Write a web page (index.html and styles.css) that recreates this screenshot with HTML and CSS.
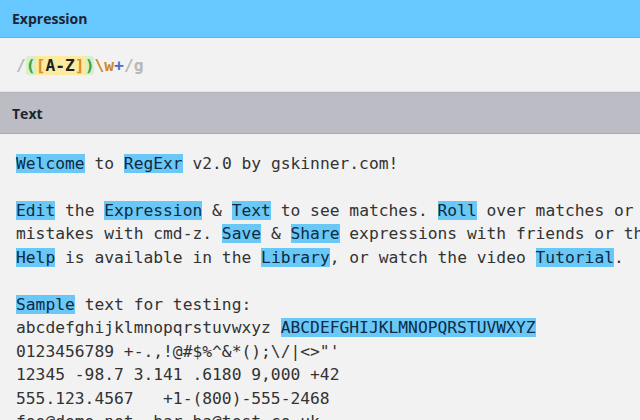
FILE: index.html
```html
<!DOCTYPE html>
<html lang="en">
<head>
    <meta charset="UTF-8">
    <title>RegExr</title>
    <link rel="stylesheet" href="styles.css">
</head>
<body>
    <div class="panel-title expression-title">Expression</div>
    <div class="expression">
        <span class="slash">/</span><span class="group"><span class="paren">(</span><span class="set"><span class="bracket">[</span>A-Z<span class="bracket">]</span></span><span class="paren">)</span></span><span class="esc">\w</span><span class="quant">+</span><span class="slash">/g</span>
    </div>
    <div class="panel-title text-title">Text</div>
    <div class="text-body">
<span class="m">Welcome</span> to <span class="m">RegExr</span> v2.0 by gskinner.com!

<span class="m">Edit</span> the <span class="m">Expression</span> &amp; <span class="m">Text</span> to see matches. <span class="m">Roll</span> over matches or use undo
mistakes with cmd-z. <span class="m">Save</span> &amp; <span class="m">Share</span> expressions with friends or the
<span class="m">Help</span> is available in the <span class="m">Library</span>, or watch the video <span class="m">Tutorial</span>.

<span class="m">Sample</span> text for testing:
abcdefghijklmnopqrstuvwxyz <span class="m">ABCDEFGHIJKLMNOPQRSTUVWXYZ</span>
0123456789 +-.,!@#$%^&amp;*();\/|&lt;&gt;"'
12345 -98.7 3.141 .6180 9,000 +42
555.123.4567   +1-(800)-555-2468
foo@demo.net  bar.ba@test.co.uk
</div>
</body>
</html>
```

FILE: styles.css
```css
body {
    margin: 0;
    background-color: #f2f2f2;
    overflow: hidden;
}
.panel-title {
    font-family: 'Open Sans', sans-serif;
    font-weight: 700;
    font-size: 14px;
    color: #1c2433;
    padding: 0 12px;
    display: flex;
    align-items: center;
}
.expression-title {
    background-color: #66c8ff;
    height: 37px;
    border-bottom: 1px solid #5cb6e6;
}
.text-title {
    background-color: #bcbcc4;
    height: 40px;
    border-top: 1px solid #b4b4b8;
    border-bottom: 1px solid #acacb0;
}
.expression {
    font-family: 'DejaVu Sans Mono', monospace;
    font-size: 16.3px;
    font-weight: 700;
    height: 51px;
    line-height: 51px;
    padding: 2px 16px 0;
    color: #222;
    border-bottom: 1px solid #e6e6e6;
}
.slash {
    color: #b8b8b8;
}
.group {
    background-color: #d8f0c8;
    border-radius: 3px;
}
.paren {
    color: #3aa043;
}
.set {
    background-color: #fbeaa0;
}
.bracket {
    color: #d9902a;
}
.esc {
    color: #c98a24;
}
.quant {
    color: #4a6bd0;
}
.text-body {
    font-family: 'DejaVu Sans Mono', monospace;
    font-size: 16.3px;
    line-height: 23.5px;
    color: #333;
    white-space: pre;
    overflow: hidden;
    padding: 4px 16px 0;
    margin-top: -10px;
}
.m {
    background-color: #6ac8f6;
    color: #0f2a44;
}
```
